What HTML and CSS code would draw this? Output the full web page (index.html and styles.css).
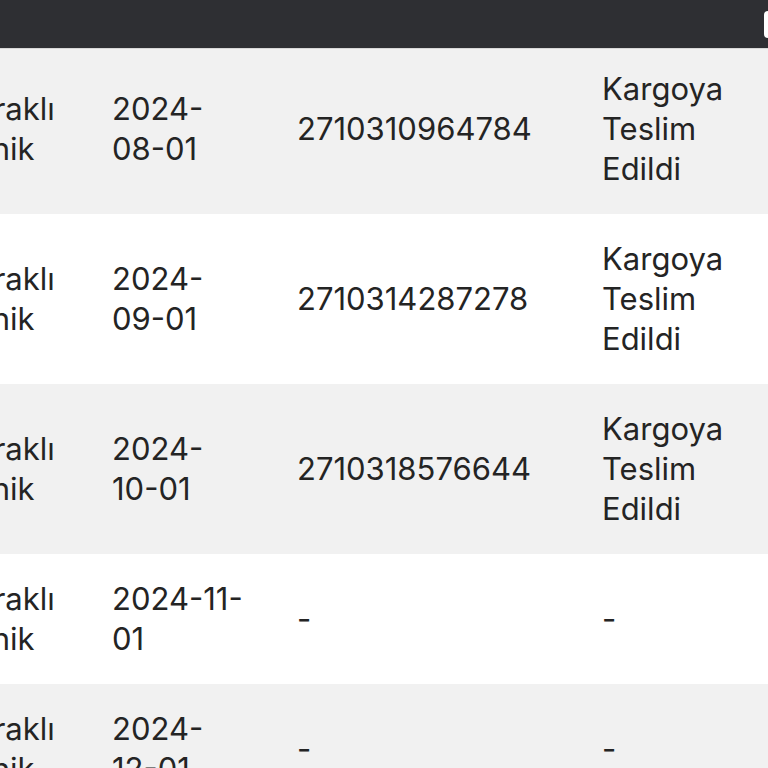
FILE: index.html
```html
<!DOCTYPE html>
<html lang="tr">
<head>
<meta charset="utf-8">
<title>Siparişler</title>
<link rel="stylesheet" href="styles.css">
</head>
<body>
<header class="topbar">
  <span class="topbar-btn"></span>
</header>
<main class="scroller">
  <table class="orders">
    <colgroup>
      <col class="c-name"><col class="c-date"><col class="c-track"><col class="c-status"><col class="c-extra">
    </colgroup>
    <tbody>
      <tr class="alt">
        <td>Bayraklı Teknik</td><td>2024-08-01</td><td>2710310964784</td><td>Kargoya Teslim Edildi</td><td></td>
      </tr>
      <tr>
        <td>Bayraklı Teknik</td><td>2024-09-01</td><td>2710314287278</td><td>Kargoya Teslim Edildi</td><td></td>
      </tr>
      <tr class="alt">
        <td>Bayraklı Teknik</td><td>2024-10-01</td><td>2710318576644</td><td>Kargoya Teslim Edildi</td><td></td>
      </tr>
      <tr>
        <td>Bayraklı Teknik</td><td>2024-11-01</td><td>-</td><td>-</td><td></td>
      </tr>
      <tr class="alt">
        <td>Bayraklı Teknik</td><td>2024-12-01</td><td>-</td><td>-</td><td></td>
      </tr>
    </tbody>
  </table>
</main>
</body>
</html>
```

FILE: styles.css
```css
html, body {
  margin: 0;
  padding: 0;
  background: #ffffff;
  overflow: hidden;
}

body {
  font-family: "Inter", "Open Sans", sans-serif;
  color: #242424;
}

.topbar {
  position: fixed;
  top: 0;
  left: 0;
  right: 0;
  height: 48px;
  background: #2e2f33;
  border-bottom: 1px solid #d8d8d8;
  z-index: 2;
}

.topbar-btn {
  position: absolute;
  top: 11px;
  right: -14px;
  width: 18px;
  height: 27px;
  background: #ffffff;
  border-radius: 4px;
}

.scroller {
  padding-top: 44px;
  width: 768px;
  overflow: hidden;
}

.orders {
  border-collapse: collapse;
  table-layout: fixed;
  width: 1063px;
  margin-left: -86px;
  font-size: 31px;
  line-height: 40px;
}

.c-name { width: 173px; }
.c-date { width: 185px; }
.c-track { width: 305px; }
.c-status { width: 200px; }
.c-extra { width: 200px; }

.orders td {
  padding: 25px;
  vertical-align: middle;
  text-align: left;
}

.orders tr {
  background: #ffffff;
}

.orders tr.alt {
  background: #f1f1f1;
}
```
